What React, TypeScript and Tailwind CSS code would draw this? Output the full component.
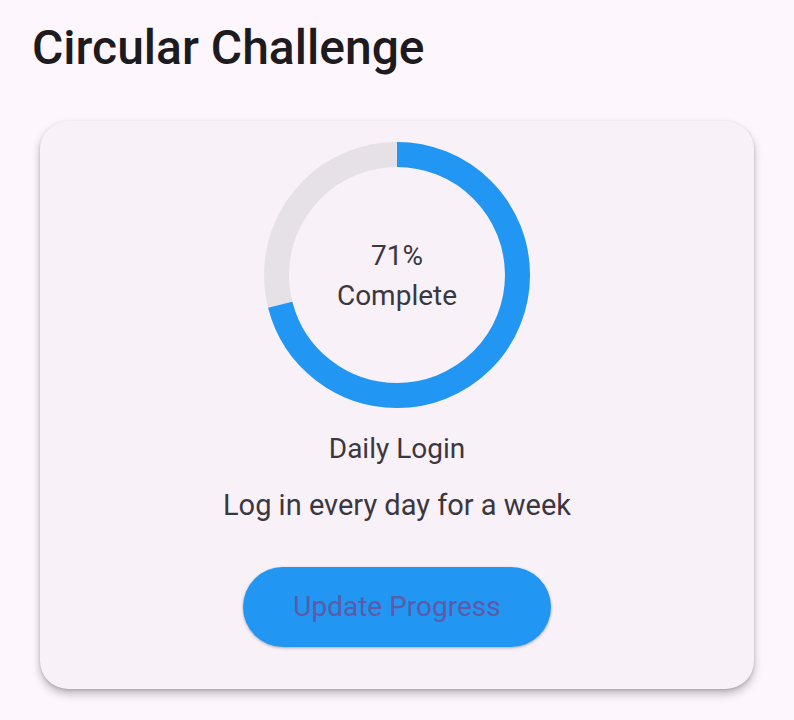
import React from 'react';

const progress = 0.71;

function ProgressRing() {
  const size = 266;
  const stroke = 25;
  const r = (size - stroke) / 2;
  const c = 2 * Math.PI * r;
  return (
    <div className="relative w-[266px] h-[266px]">
      <svg width={size} height={size} viewBox={`0 0 ${size} ${size}`} className="absolute inset-0">
        <circle cx={size / 2} cy={size / 2} r={r} fill="none" stroke="#e6e0e7" strokeWidth={stroke} />
        <circle
          cx={size / 2}
          cy={size / 2}
          r={r}
          fill="none"
          stroke="#2196f3"
          strokeWidth={stroke}
          strokeDasharray={`${c * progress} ${c}`}
          transform={`rotate(-90 ${size / 2} ${size / 2})`}
        />
      </svg>
      <div className="absolute inset-0 flex flex-col items-center justify-center text-[28px] leading-[40px] text-[#3b3740] pt-[2px]">
        <span>71%</span>
        <span>Complete</span>
      </div>
    </div>
  );
}

export default function App() {
  return (
    <div className="min-h-[720px] bg-[#fdf7fd] px-[32px] pt-[22px] font-['Roboto',sans-serif]">
      <h1 className="text-[48px] leading-[52px] font-medium text-[#1d1b20]">Circular Challenge</h1>
      <div className="mx-[8px] mt-[47px] rounded-[28px] bg-[#f8f1f8] shadow-[0_5px_8px_rgba(0,0,0,0.25),0_1px_3px_rgba(0,0,0,0.15)] flex flex-col items-center pt-[21px] pb-[42px]">
        <ProgressRing />
        <div className="mt-[23px] text-[28px] leading-[36px] text-[#3b3740]">Daily Login</div>
        <div className="mt-[20px] text-[29px] leading-[36px] text-[#3b3740]">Log in every day for a week</div>
        <button className="mt-[44px] w-[308px] h-[80px] rounded-full bg-[#2196f3] text-[28px] text-[#5e5aa8] shadow-[0_1px_3px_rgba(0,0,0,0.3)]">
          Update Progress
        </button>
      </div>
    </div>
  );
}
